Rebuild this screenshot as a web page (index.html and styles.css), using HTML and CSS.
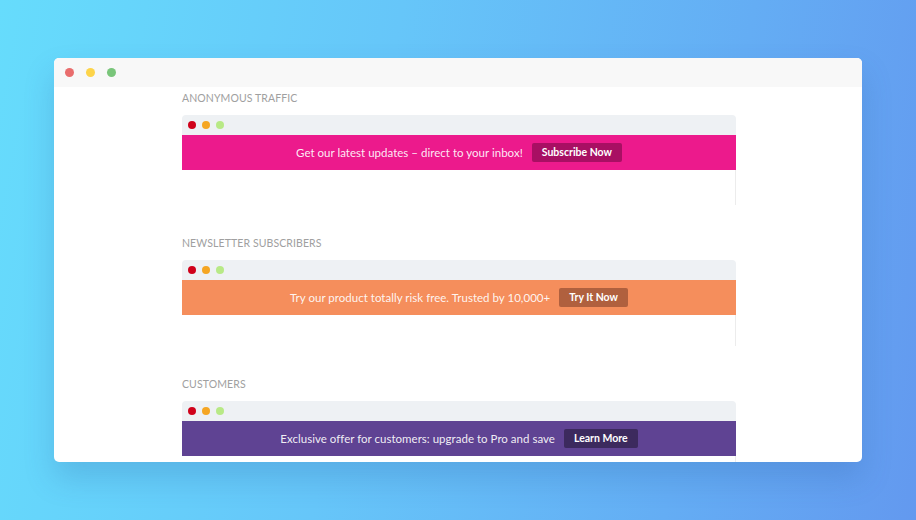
FILE: index.html
```html
<!DOCTYPE html>
<html>
<head>
<meta charset="utf-8">
<link rel="stylesheet" href="styles.css">
</head>
<body>
<div class="stage">
  <div class="window">
    <div class="titlebar">
      <span class="dot dot-red"></span>
      <span class="dot dot-yellow"></span>
      <span class="dot dot-green"></span>
    </div>
    <div class="content">
      <div class="column">
        <section class="segment">
          <div class="label">Anonymous Traffic</div>
          <div class="mini">
            <div class="mini-bar">
              <span class="mdot mdot-red"></span>
              <span class="mdot mdot-orange"></span>
              <span class="mdot mdot-green"></span>
            </div>
            <div class="banner banner-pink">
              <span class="banner-text">Get our latest updates – direct to your inbox!</span>
              <span class="btn btn-pink">Subscribe Now</span>
            </div>
            <div class="mini-body"></div>
          </div>
        </section>
        <section class="segment segment-short">
          <div class="label">Newsletter Subscribers</div>
          <div class="mini">
            <div class="mini-bar">
              <span class="mdot mdot-red"></span>
              <span class="mdot mdot-orange"></span>
              <span class="mdot mdot-green"></span>
            </div>
            <div class="banner banner-orange">
              <span class="banner-text">Try our product totally risk free. Trusted by 10,000+</span>
              <span class="btn btn-orange">Try It Now</span>
            </div>
            <div class="mini-body"></div>
          </div>
        </section>
        <section class="segment">
          <div class="label">Customers</div>
          <div class="mini">
            <div class="mini-bar">
              <span class="mdot mdot-red"></span>
              <span class="mdot mdot-orange"></span>
              <span class="mdot mdot-green"></span>
            </div>
            <div class="banner banner-purple">
              <span class="banner-text">Exclusive offer for customers: upgrade to Pro and save</span>
              <span class="btn btn-purple">Learn More</span>
            </div>
            <div class="mini-body"></div>
          </div>
        </section>
      </div>
    </div>
  </div>
</div>
</body>
</html>
```

FILE: styles.css
```css
html, body {
  margin: 0;
  padding: 0;
}
body {
  width: 916px;
  height: 520px;
  overflow: hidden;
  font-family: Lato, "Open Sans", "Liberation Sans", sans-serif;
}
.stage {
  width: 916px;
  height: 520px;
  box-sizing: border-box;
  padding: 58px 54px 0 54px;
  background: linear-gradient(100deg, #66dcfc 0%, #66c6f9 40%, #64adf4 75%, #6399ef 100%);
}
.window {
  width: 808px;
  height: 404px;
  background: #ffffff;
  border-radius: 5px;
  overflow: hidden;
  display: flex;
  flex-direction: column;
  box-shadow: 0 16px 30px rgba(40, 90, 160, 0.22);
}
.titlebar {
  height: 29px;
  flex: none;
  background: #f8f8f8;
  display: flex;
  align-items: center;
  gap: 12px;
  padding-left: 11px;
}
.dot {
  width: 9px;
  height: 9px;
  border-radius: 50%;
  display: block;
  margin-top: -1px;
}
.dot-red { background: #e96d6d; }
.dot-yellow { background: #fdd44a; }
.dot-green { background: #79c57a; }
.content {
  flex: 1;
  overflow: hidden;
  padding-left: 128px;
}
.column {
  width: 554px;
  padding-top: 4px;
}
.segment {
  margin-bottom: 31px;
}
.segment-short .mini-body {
  height: 31px;
}
.label {
  font-size: 10.5px;
  line-height: 14px;
  color: #a0a0a0;
  text-transform: uppercase;
  letter-spacing: 0.1px;
  margin-bottom: 10px;
}
.mini {
  width: 554px;
}
.mini-bar {
  height: 20px;
  background: #eef1f4;
  border-radius: 4px 4px 0 0;
  display: flex;
  align-items: center;
  gap: 6px;
  padding-left: 6px;
}
.mdot {
  width: 8px;
  height: 8px;
  border-radius: 50%;
  display: block;
}
.mdot-red { background: #d0021b; }
.mdot-orange { background: #f5a623; }
.mdot-green { background: #b8e986; }
.banner {
  height: 35px;
  display: flex;
  align-items: center;
  justify-content: center;
  gap: 9px;
}
.banner-pink { background: #ec1a8c; }
.banner-orange { background: #f58e5c; }
.banner-purple { background: #5f4393; }
.banner-text {
  color: rgba(255, 255, 255, 0.92);
  font-size: 11.5px;
  letter-spacing: 0.02px;
}
.btn {
  color: #fff;
  font-size: 10.5px;
  font-weight: 700;
  height: 19px;
  line-height: 19px;
  padding: 0 10px;
  border-radius: 2px;
}
.btn-pink { background: #a80f63; }
.btn-orange { background: #b0603e; }
.btn-purple { background: #3c2a5e; }
.mini-body {
  height: 35px;
  border-right: 1px solid #ececec;
}
```
